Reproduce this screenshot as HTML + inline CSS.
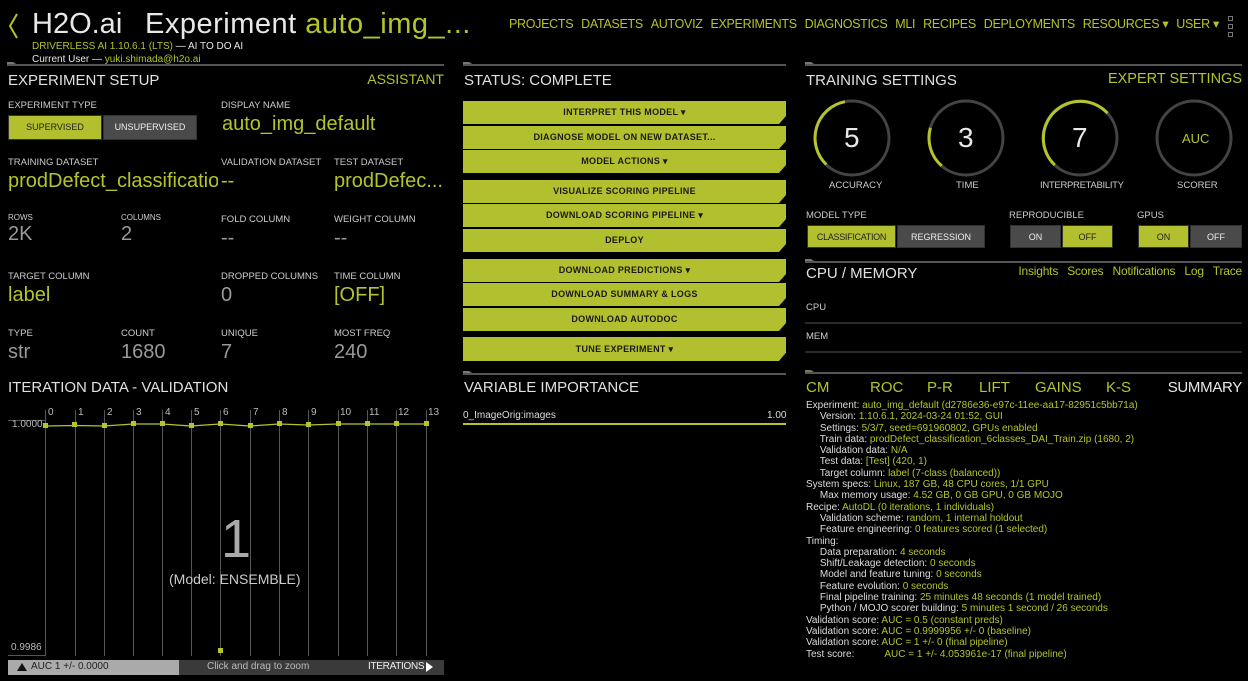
<!DOCTYPE html>
<html><head><meta charset="utf-8">
<style>
*{margin:0;padding:0;box-sizing:border-box}
body{width:1248px;height:681px;background:#000;overflow:hidden;position:relative;font-family:"Liberation Sans Narrow","Liberation Sans",sans-serif;color:#ddd}
.t{position:absolute;white-space:nowrap;line-height:1}
.g{color:#b5c42a}
.w{color:#e8e8e8}
.gr{color:#bbb}
.lab{font-size:9.5px;color:#ccc}
.val{font-size:20px;color:#b5c42a}
.valw{font-size:20px;color:#999}
.h{font-size:15px;color:#e0e0e0}
.btn{position:absolute;background:#b2c030;color:#1a1a1a;font-size:9px;font-weight:bold;text-align:center;letter-spacing:.3px;clip-path:polygon(0 0,100% 0,100% 65%,calc(100% - 7px) 100%,0 100%)}
.tg{position:absolute;font-size:9px;text-align:center;line-height:22px;border:1px solid #333}
.on{background:#b2c030;color:#222}
.off{background:#4a4a4a;color:#eee}
.sum{position:absolute;left:806px;top:400px;font-size:10px;line-height:11.3px;color:#ddd;white-space:pre}
.sum span{color:#b5c42a}
.r{text-align:right}
</style></head><body>
<svg style="position:absolute;left:0;top:0" width="1248" height="681">
<path d="M17 14 L10 26 L17 38" stroke="#b5c42a" stroke-width="2" fill="none"/>
<g stroke="#555" stroke-width="2">
<line x1="7" y1="65" x2="444" y2="65"/><line x1="463" y1="65" x2="786" y2="65"/><line x1="805" y1="65" x2="1242" y2="65"/>
<line x1="463" y1="374" x2="786" y2="374"/><line x1="805" y1="262" x2="1242" y2="262"/><line x1="805" y1="373" x2="1242" y2="373"/>
</g>
<g fill="#777"><path d="M7 62h6l3 2H7z"/><path d="M463 62h6l3 2h-9z"/><path d="M805 62h6l3 2h-9z"/><path d="M463 371h6l3 2h-9z"/><path d="M805 259h6l3 2h-9z"/><path d="M805 370h6l3 2h-9z"/></g>
<g stroke="#555" stroke-width="1"><line x1="805" y1="323" x2="1242" y2="323"/><line x1="805" y1="352" x2="1242" y2="352"/></g>
<g fill="none" stroke="#444" stroke-width="3">
<circle cx="852" cy="138" r="37"/><circle cx="966" cy="138" r="37"/><circle cx="1080" cy="138" r="37"/><circle cx="1194" cy="138" r="37"/></g>
<g fill="none" stroke="#b5c42a" stroke-width="3">
<path d="M826.3 164.6 A37 37 0 0 1 844.9 101.7"/>
<path d="M941.7 165.9 A37 37 0 0 1 930.4 127.8"/>
<path d="M1054.8 165.1 A37 37 0 1 1 1107.5 113.2"/></g>
<g stroke="#555" stroke-width="1">
<line x1="45.5" y1="410" x2="45.5" y2="656"/><line x1="75.5" y1="410" x2="75.5" y2="656"/><line x1="104.5" y1="410" x2="104.5" y2="656"/><line x1="133.5" y1="410" x2="133.5" y2="656"/><line x1="162.5" y1="410" x2="162.5" y2="656"/><line x1="191.5" y1="410" x2="191.5" y2="656"/><line x1="220.5" y1="410" x2="220.5" y2="656"/><line x1="250.5" y1="410" x2="250.5" y2="656"/><line x1="279.5" y1="410" x2="279.5" y2="656"/><line x1="308.5" y1="410" x2="308.5" y2="656"/><line x1="338.5" y1="410" x2="338.5" y2="656"/><line x1="367.5" y1="410" x2="367.5" y2="656"/><line x1="396.5" y1="410" x2="396.5" y2="656"/><line x1="426.5" y1="410" x2="426.5" y2="656"/>
<line x1="8" y1="420.5" x2="45" y2="420.5"/><line x1="8" y1="655.5" x2="45" y2="655.5"/>
</g>
<polyline points="46,426 75,425.5 104,426 133,424 162,424 191,426 220,424 250,426 279,424 308,425 338,424 367,424 396,424 426,424" stroke="#b5c42a" fill="none" stroke-width="1.2"/>
<g fill="#b5c42a">
<rect x="43" y="423" width="5" height="5"/><rect x="72" y="422" width="5" height="5"/><rect x="102" y="423" width="5" height="5"/><rect x="131" y="421" width="5" height="5"/><rect x="160" y="421" width="5" height="5"/><rect x="189" y="423" width="5" height="5"/><rect x="218" y="421" width="5" height="5"/><rect x="248" y="423" width="5" height="5"/><rect x="277" y="421" width="5" height="5"/><rect x="306" y="422" width="5" height="5"/><rect x="336" y="421" width="5" height="5"/><rect x="365" y="421" width="5" height="5"/><rect x="394" y="421" width="5" height="5"/><rect x="424" y="421" width="5" height="5"/>
<rect x="218" y="648" width="5" height="5"/></g>
<rect x="8" y="660" width="171" height="15" fill="#aaa"/><rect x="179" y="660" width="265" height="15" fill="#3a3a3a"/>
<path d="M17 671 L22 663 L27 671Z" fill="#111"/>
<path d="M426 662 L433 667 L426 672Z" fill="#fff"/>
<line x1="463" y1="424" x2="786" y2="424" stroke="#b5c42a" stroke-width="2"/>
<g fill="none" stroke="#777"><rect x="1228.5" y="16.5" width="4" height="4"/><rect x="1228.5" y="24.5" width="4" height="4"/><rect x="1228.5" y="32.5" width="4" height="4"/></g>
</svg>

<div class="t w" style="left:32px;top:10px;font-size:29px">H2O.ai</div>
<div class="t w" style="left:145px;top:10px;font-size:29px;letter-spacing:0.5px">Experiment <span class="g">auto_img_...</span></div>
<div class="t" style="left:32px;top:42px;font-size:10px"><span class="g">DRIVERLESS AI 1.10.6.1 (LTS)</span> <span class="w">— AI TO DO AI</span></div>
<div class="t w" style="left:32px;top:55px;font-size:10px">Current User — <span class="g">yuki.shimada@h2o.ai</span></div>
<div class="t g" style="left:509px;top:18px;width:710px;font-size:12.5px;letter-spacing:-0.3px;display:flex;justify-content:space-between"><span>PROJECTS</span><span>DATASETS</span><span>AUTOVIZ</span><span>EXPERIMENTS</span><span>DIAGNOSTICS</span><span>MLI</span><span>RECIPES</span><span>DEPLOYMENTS</span><span>RESOURCES ▾</span><span>USER ▾</span></div>

<div class="t h" style="left:8px;top:73px">EXPERIMENT SETUP</div>
<div class="t g r" style="left:344px;width:100px;top:72px;font-size:14px">ASSISTANT</div>
<div class="t lab" style="left:8px;top:101px">EXPERIMENT TYPE</div>
<div class="tg on" style="left:8px;top:115px;width:94px;height:25px;line-height:23px">SUPERVISED</div>
<div class="tg off" style="left:103px;top:115px;width:94px;height:25px;line-height:23px">UNSUPERVISED</div>
<div class="t lab" style="left:221px;top:101px">DISPLAY NAME</div>
<div class="t val" style="left:222px;top:114px">auto_img_default</div>

<div class="t lab" style="left:8px;top:158px">TRAINING DATASET</div>
<div class="t val" style="left:8px;top:171px;width:210px;overflow:hidden">prodDefect_classificatio</div>
<div class="t lab" style="left:221px;top:158px">VALIDATION DATASET</div>
<div class="t val" style="left:221px;top:171px">--</div>
<div class="t lab" style="left:334px;top:158px">TEST DATASET</div>
<div class="t val" style="left:334px;top:171px">prodDefec...</div>

<div class="t lab" style="left:8px;top:214px;font-size:8px">ROWS</div>
<div class="t valw" style="left:8px;top:224px">2K</div>
<div class="t lab" style="left:121px;top:214px;font-size:8px">COLUMNS</div>
<div class="t valw" style="left:121px;top:224px">2</div>
<div class="t lab" style="left:221px;top:215px">FOLD COLUMN</div>
<div class="t valw" style="left:221px;top:228px">--</div>
<div class="t lab" style="left:334px;top:215px">WEIGHT COLUMN</div>
<div class="t valw" style="left:334px;top:228px">--</div>

<div class="t lab" style="left:8px;top:272px">TARGET COLUMN</div>
<div class="t val" style="left:8px;top:285px">label</div>
<div class="t lab" style="left:221px;top:272px">DROPPED COLUMNS</div>
<div class="t valw" style="left:221px;top:285px">0</div>
<div class="t lab" style="left:334px;top:272px">TIME COLUMN</div>
<div class="t val" style="left:334px;top:285px">[OFF]</div>

<div class="t lab" style="left:8px;top:329px">TYPE</div>
<div class="t valw" style="left:8px;top:342px">str</div>
<div class="t lab" style="left:121px;top:329px">COUNT</div>
<div class="t valw" style="left:121px;top:342px">1680</div>
<div class="t lab" style="left:221px;top:329px">UNIQUE</div>
<div class="t valw" style="left:221px;top:342px">7</div>
<div class="t lab" style="left:334px;top:329px">MOST FREQ</div>
<div class="t valw" style="left:334px;top:342px">240</div>

<div class="t h" style="left:8px;top:380px">ITERATION DATA - VALIDATION</div>
<div class="t gr" style="left:48px;top:408px;font-size:10px">0</div>
<div class="t gr" style="left:78px;top:408px;font-size:10px">1</div>
<div class="t gr" style="left:107px;top:408px;font-size:10px">2</div>
<div class="t gr" style="left:136px;top:408px;font-size:10px">3</div>
<div class="t gr" style="left:165px;top:408px;font-size:10px">4</div>
<div class="t gr" style="left:194px;top:408px;font-size:10px">5</div>
<div class="t gr" style="left:223px;top:408px;font-size:10px">6</div>
<div class="t gr" style="left:253px;top:408px;font-size:10px">7</div>
<div class="t gr" style="left:282px;top:408px;font-size:10px">8</div>
<div class="t gr" style="left:311px;top:408px;font-size:10px">9</div>
<div class="t gr" style="left:340px;top:408px;font-size:10px">10</div>
<div class="t gr" style="left:369px;top:408px;font-size:10px">11</div>
<div class="t gr" style="left:398px;top:408px;font-size:10px">12</div>
<div class="t gr" style="left:428px;top:408px;font-size:10px">13</div>
<div class="t gr" style="left:12px;top:420px;font-size:10px">1.0000</div>
<div class="t gr" style="left:11px;top:643px;font-size:10px">0.9986</div>
<div class="t" style="left:221px;top:512px;font-size:54px;color:#aaa">1</div>
<div class="t" style="left:169px;top:572px;font-size:14px;color:#ccc">(Model: ENSEMBLE)</div>
<div class="t" style="left:31px;top:662px;font-size:10px;color:#222">AUC 1 +/- 0.0000</div>
<div class="t" style="left:207px;top:662px;font-size:10px;color:#bbb">Click and drag to zoom</div>
<div class="t" style="left:368px;top:662px;font-size:10px;color:#eee;letter-spacing:-0.3px">ITERATIONS</div>

<div class="t h" style="left:464px;top:73px">STATUS: COMPLETE</div>
<div class="btn" style="left:463px;top:101px;width:323px;height:23px;line-height:23px">INTERPRET THIS MODEL ▾</div>
<div class="btn" style="left:463px;top:126px;width:323px;height:23px;line-height:23px">DIAGNOSE MODEL ON NEW DATASET...</div>
<div class="btn" style="left:463px;top:150px;width:323px;height:23px;line-height:23px">MODEL ACTIONS ▾</div>
<div class="btn" style="left:463px;top:180px;width:323px;height:23px;line-height:23px">VISUALIZE SCORING PIPELINE</div>
<div class="btn" style="left:463px;top:204px;width:323px;height:23px;line-height:23px">DOWNLOAD SCORING PIPELINE ▾</div>
<div class="btn" style="left:463px;top:229px;width:323px;height:23px;line-height:23px">DEPLOY</div>
<div class="btn" style="left:463px;top:259px;width:323px;height:23px;line-height:23px">DOWNLOAD PREDICTIONS ▾</div>
<div class="btn" style="left:463px;top:283px;width:323px;height:23px;line-height:23px">DOWNLOAD SUMMARY &amp; LOGS</div>
<div class="btn" style="left:463px;top:308px;width:323px;height:23px;line-height:23px">DOWNLOAD AUTODOC</div>
<div class="btn" style="left:463px;top:337px;width:323px;height:24px;line-height:24px">TUNE EXPERIMENT ▾</div>
<div class="t h" style="left:464px;top:380px">VARIABLE IMPORTANCE</div>
<div class="t" style="left:463px;top:411px;font-size:10px;color:#ddd">0_ImageOrig:images</div>
<div class="t" style="left:767px;top:411px;font-size:10px;color:#ddd">1.00</div>

<div class="t h" style="left:806px;top:73px">TRAINING SETTINGS</div>
<div class="t g r" style="left:1042px;width:200px;top:72px;font-size:14.5px">EXPERT SETTINGS</div>
<div class="t w" style="left:844px;top:124px;font-size:28px">5</div>
<div class="t w" style="left:958px;top:124px;font-size:28px">3</div>
<div class="t w" style="left:1072px;top:124px;font-size:28px">7</div>
<div class="t g" style="left:1182px;top:132px;font-size:13px">AUC</div>
<div class="t lab" style="left:829px;top:181px">ACCURACY</div>
<div class="t lab" style="left:956px;top:181px">TIME</div>
<div class="t lab" style="left:1040px;top:181px;letter-spacing:-0.3px">INTERPRETABILITY</div>
<div class="t lab" style="left:1177px;top:181px">SCORER</div>
<div class="t lab" style="left:806px;top:211px">MODEL TYPE</div>
<div class="tg on" style="left:807px;top:225px;width:89px;height:23px;letter-spacing:-0.3px">CLASSIFICATION</div>
<div class="tg off" style="left:897px;top:225px;width:88px;height:23px">REGRESSION</div>
<div class="t lab" style="left:1009px;top:211px">REPRODUCIBLE</div>
<div class="tg off" style="left:1010px;top:225px;width:51px;height:23px">ON</div>
<div class="tg on" style="left:1062px;top:225px;width:51px;height:23px">OFF</div>
<div class="t lab" style="left:1137px;top:211px">GPUS</div>
<div class="tg on" style="left:1138px;top:225px;width:51px;height:23px">ON</div>
<div class="tg off" style="left:1190px;top:225px;width:52px;height:23px">OFF</div>

<div class="t h" style="left:806px;top:266px">CPU / MEMORY</div>
<div class="t g r" style="left:942px;width:300px;top:265px;font-size:12px;word-spacing:6px;letter-spacing:-0.2px">Insights Scores Notifications Log Trace</div>
<div class="t lab" style="left:806px;top:303px">CPU</div>
<div class="t lab" style="left:806px;top:332px">MEM</div>

<div class="t g" style="left:806px;top:380px;font-size:15px">CM</div>
<div class="t g" style="left:870px;top:380px;font-size:15px">ROC</div>
<div class="t g" style="left:927px;top:380px;font-size:15px">P-R</div>
<div class="t g" style="left:979px;top:380px;font-size:15px">LIFT</div>
<div class="t g" style="left:1035px;top:380px;font-size:15px">GAINS</div>
<div class="t g" style="left:1106px;top:380px;font-size:15px">K-S</div>
<div class="t w r" style="left:1142px;width:100px;top:380px;font-size:15px;letter-spacing:-0.3px">SUMMARY</div>

<div class="sum">Experiment: <span>auto_img_default (d2786e36-e97c-11ee-aa17-82951c5bb71a)</span>
     Version: <span>1.10.6.1, 2024-03-24 01:52, GUI</span>
     Settings: <span>5/3/7, seed=691960802, GPUs enabled</span>
     Train data: <span>prodDefect_classification_6classes_DAI_Train.zip (1680, 2)</span>
     Validation data: <span>N/A</span>
     Test data: <span>[Test] (420, 1)</span>
     Target column: <span>label (7-class (balanced))</span>
System specs: <span>Linux, 187 GB, 48 CPU cores, 1/1 GPU</span>
     Max memory usage: <span>4.52 GB, 0 GB GPU, 0 GB MOJO</span>
Recipe: <span>AutoDL (0 iterations, 1 individuals)</span>
     Validation scheme: <span>random, 1 internal holdout</span>
     Feature engineering: <span>0 features scored (1 selected)</span>
Timing:
     Data preparation: <span>4 seconds</span>
     Shift/Leakage detection: <span>0 seconds</span>
     Model and feature tuning: <span>0 seconds</span>
     Feature evolution: <span>0 seconds</span>
     Final pipeline training: <span>25 minutes 48 seconds (1 model trained)</span>
     Python / MOJO scorer building: <span>5 minutes 1 second / 26 seconds</span>
Validation score: <span>AUC = 0.5 (constant preds)</span>
Validation score: <span>AUC = 0.9999956 +/- 0 (baseline)</span>
Validation score: <span>AUC = 1 +/- 0 (final pipeline)</span>
Test score:           <span>AUC = 1 +/- 4.053961e-17 (final pipeline)</span></div>
</body></html>
